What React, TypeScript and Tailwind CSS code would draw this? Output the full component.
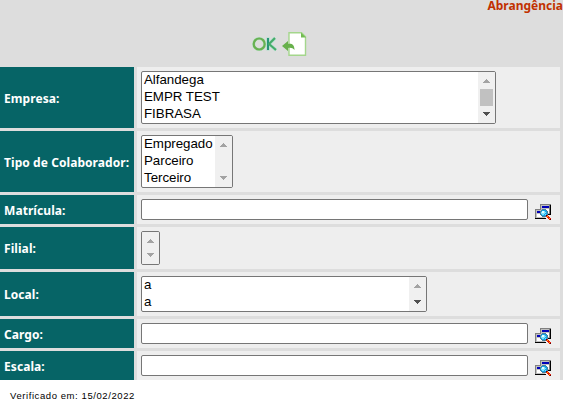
import type { ReactNode } from "react";

function Arrow({ down = false, dark = false }: { down?: boolean; dark?: boolean }) {
  return (
    <svg width="7" height="4" viewBox="0 0 7 4" shapeRendering="crispEdges" className={dark ? "text-[#505050]" : "text-[#a3a3a3]"}>
      <path fill="currentColor" d={down ? "M0 0h7v1H6v1H5v1H4v1H3V3H2V2H1V1H0z" : "M3 0h1v1h1v1h1v1h1v1H0V3h1V2h1V1h1z"} />
    </svg>
  );
}

function ListBox({ size, items, active = false, thumb = false }: { size: string; items: string[]; active?: boolean; thumb?: boolean }) {
  return (
    <div className={`flex overflow-hidden rounded-[2px] border border-[#767676] bg-white ${size}`}>
      <div className="min-w-0 flex-1">
        {items.map((item, i) => (
          <div key={i} className="h-[17px] whitespace-nowrap pl-[2px] font-['Liberation_Sans',Arial,sans-serif] text-[13.333px] leading-[15px] tracking-[-0.03px] text-black">{item}</div>
        ))}
      </div>
      <div className="flex w-[17px] shrink-0 flex-col items-center justify-between bg-[#f0f0f0] py-[7px]">
        <Arrow />
        {thumb && <div className="-mt-[1px] h-[17px] w-[13px] bg-[#c1c1c1]" />}
        <Arrow down dark={active} />
      </div>
    </div>
  );
}

function SearchIcon() {
  return (
    <svg width="16" height="16" viewBox="0 0 16 16" shapeRendering="crispEdges" aria-label="Pesquisar">
      <path fill="#000" d="M15 1h1v10h-1zM12 10h4v1h-4zM0 14h11v1H0z" />
      <path fill="#808080" d="M5 0h11v1H6v5H5zM0 5h6v1H1v8H0zM14 1h1v9h-1z" />
      <path fill="#c0c0c0" d="M6 1h8v9H6zM1 6h9v8H1z" />
      <path fill="#0000b8" d="M7 2h7v2H7zM2 7h4v2H2z" />
      <path fill="#fff" d="M7 5h7v4H7zM2 10h8v3H2z" />
      <path fill="#4b7f9a" d="M7 5h4v1h1v1h1v4h-1v1h-1v1H7v-1H6v-1H5V7h1V6h1z" />
      <path fill="#18a4e4" d="M7 6h4v1h1v4h-1v1H7v-1H6V7h1z" />
      <path fill="#7fe4ff" d="M7 7h3v1h1v1h-1v1H9v1H7v-1H6V8h1zM10 10h1v1h-1z" />
      <path fill="#e8ffff" d="M7 7h2v2H7z" />
      <path fill="#600000" d="M11 11h2v1h1v1h1v1h1v2h-2v-1h-1v-1h-1v-1h-1z" />
      <path fill="#e81808" d="M12 11h1v1h1v1h1v1h1v1h-1v1h-1v-1h-1v-1h-1v-1h-1v-1h1z" />
      <path fill="#ffb000" d="M12 12h1v1h-1zM14 14h1v1h-1z" />
    </svg>
  );
}

function Row({ label, height, children }: { label: string; height: string; children: ReactNode }) {
  return (
    <div className={`flex gap-[3px] ${height}`}>
      <div className="flex w-[134px] shrink-0 items-center bg-[#066466] pl-1 pt-[2px] font-['Noto_Sans',sans-serif] text-xs font-bold tracking-[0.07px] whitespace-nowrap text-white">{label}</div>
      <div className="flex w-[423px] items-start bg-[#eee] pl-1 pt-1">{children}</div>
    </div>
  );
}

function SearchField({ label }: { label: string }) {
  return (
    <>
      <input aria-label={label} className="h-[21px] w-[387px] rounded-[2px] border border-[#767676] bg-white px-[2px] font-['Liberation_Sans',sans-serif] text-[13.333px] outline-none" />
      <button aria-label={`Pesquisar ${label}`} className="ml-[7px] mt-[5px]"><SearchIcon /></button>
    </>
  );
}

function Toolbar() {
  return (
    <div className="ml-[252px] mt-[19px] flex h-[24px] items-center">
      <svg width="25" height="16" viewBox="0 0 25 16" fill="none" aria-label="OK">
        <circle cx="7.2" cy="8" r="5.5" stroke="#b4e3c4" strokeWidth="3.2" />
        <path d="M16 1.5v13M23 2l-6 6 7 6" stroke="#a9dfca" strokeWidth="3.2" />
        <circle cx="7.2" cy="8" r="5.5" stroke="#69b052" strokeWidth="2.2" />
        <path d="M16 2v12" stroke="#289477" strokeWidth="2" />
        <path d="M23 2l-6 6 7 6" stroke="#45ab68" strokeWidth="2" />
      </svg>
      <svg width="25" height="24" viewBox="0 0 25 24" className="ml-[5px]" aria-label="Voltar">
        <path d="M7 .8h12.5l4 4v18.4H7z" fill="#fff" stroke="#a4d68c" strokeWidth="1.4" />
        <path d="M19 .5v5h5z" fill="#72bb52" />
        <path d="M0 14l6-5v3c4-.7 6.5 1 6.5 6-1.7-2-3.5-2.5-6.5-2v3z" fill="#67b04b" />
      </svg>
    </div>
  );
}

export default function App() {
  return (
    <main className="h-[410px] w-[563px] overflow-hidden bg-white">
      <div className="h-[380px] bg-[#ddd]">
        <header className="h-[67px]">
          <h1 className="h-[13px] text-right font-['Noto_Sans',sans-serif] text-xs leading-[12px] font-bold text-[#c13100]">Abrangência</h1>
          <Toolbar />
        </header>
        <div className="flex flex-col gap-[3px]">
          <Row label="Empresa:" height="h-[61px]"><ListBox size="h-[53px] w-[355px]" items={["Alfandega", "EMPR TEST", "FIBRASA"]} active thumb /></Row>
          <Row label="Tipo de Colaborador:" height="h-[61px]"><ListBox size="h-[53px] w-[92px]" items={["Empregado", "Parceiro", "Terceiro"]} /></Row>
          <Row label="Matrícula:" height="h-[29px]"><SearchField label="Matrícula" /></Row>
          <Row label="Filial:" height="h-[42px]"><ListBox size="h-[34px] w-[19px]" items={[]} /></Row>
          <Row label="Local:" height="h-[44px]"><ListBox size="h-[36px] w-[286px]" items={["a", "a"]} active /></Row>
          <Row label="Cargo:" height="h-[29px]"><SearchField label="Cargo" /></Row>
          <Row label="Escala:" height="h-[29px]"><SearchField label="Escala" /></Row>
        </div>
      </div>
      <footer className="pt-[9px] pl-[10px] font-['Liberation_Sans',Arial,sans-serif] text-[9.5px] leading-[13px] tracking-[0.58px] text-black">Verificado em: 15/02/2022</footer>
    </main>
  );
}
